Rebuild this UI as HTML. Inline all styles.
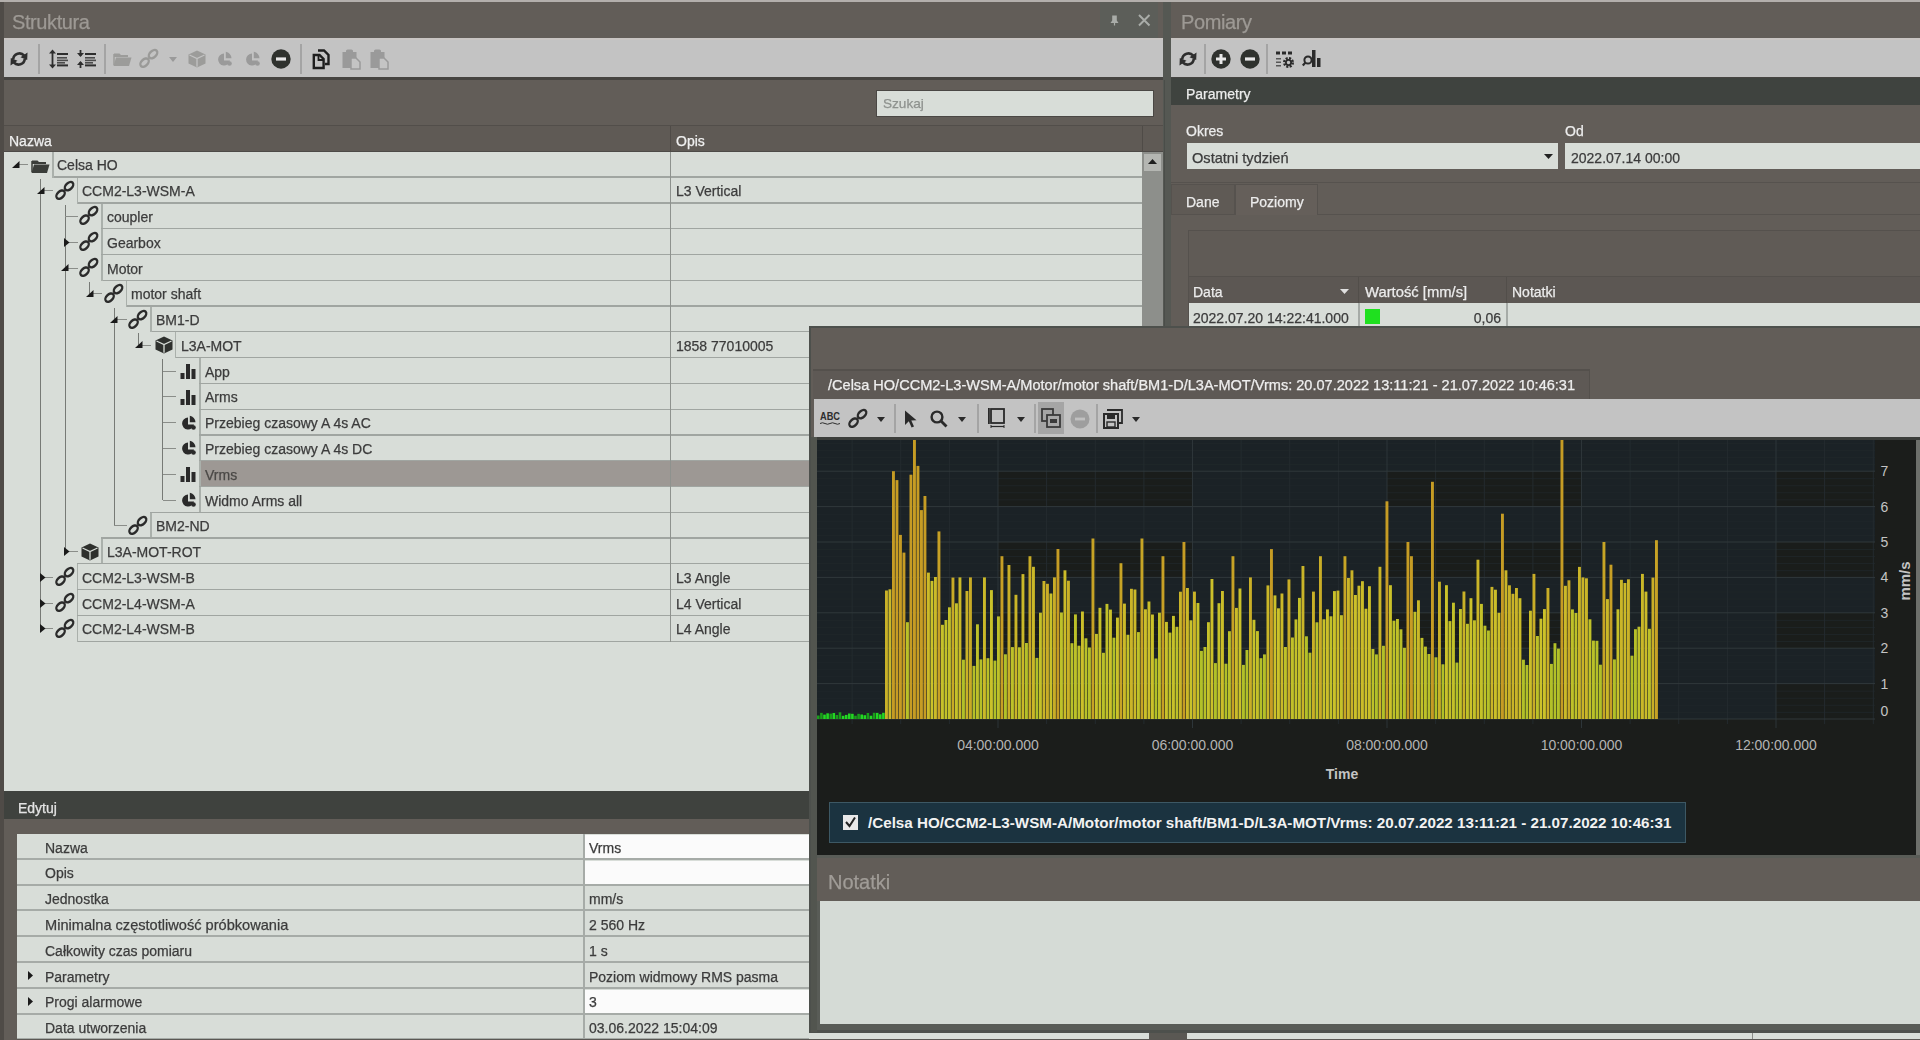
<!DOCTYPE html>
<html><head><meta charset="utf-8">
<style>
*{margin:0;padding:0;box-sizing:border-box}
html,body{width:1920px;height:1040px;overflow:hidden;background:#625d58;font-family:"Liberation Sans",sans-serif;font-size:14px;color:#3a3a3a}
.a{position:absolute}
.t{position:absolute;white-space:nowrap;line-height:1;will-change:transform;-webkit-text-stroke:0.25px currentColor}
body{-webkit-font-smoothing:antialiased}
</style></head><body>
<div class="a" style="left:0px;top:0px;width:1920px;height:2px;background:#b3afac;"></div>
<div class="a" style="left:0px;top:2px;width:4px;height:1038px;background:#4f4b47;"></div>
<div class="a" style="left:4px;top:2px;width:1160px;height:36px;background:#625d58;"></div>
<div class="t" style="left:12px;top:12px;font-size:20px;color:#9d9994;letter-spacing:-0.4px">Struktura</div>
<div class="a" style="left:1100px;top:2px;width:58px;height:36px;background:#5c5e59;"></div>
<svg class="a" style="left:1109.5px;top:14.5px;overflow:visible" width="9" height="11" viewBox="0 0 9 11"><path d="M2.2 0.5 L6.8 0.5 L6.8 5.5 L8.5 8 L0.5 8 L2.2 5.5 Z" fill="#a9aca8"/><rect x="3.9" y="8" width="1.2" height="2.5" fill="#a9aca8"/></svg>
<svg class="a" style="left:1137.8px;top:14.2px;overflow:visible" width="12.5" height="12.5" viewBox="0 0 12.5 12.5"><path d="M1 1 L11.5 11.5 M11.5 1 L1 11.5" stroke="#a9aca8" stroke-width="2"/></svg>
<div class="a" style="left:4px;top:38px;width:1160px;height:39px;background:#c3c3c3;"></div>
<div class="a" style="left:4px;top:38px;width:1160px;height:2px;background:#c9c5c3;"></div>
<svg class="a" style="left:10px;top:51px;overflow:visible" width="18" height="16" viewBox="0 0 18 16"><path d="M3.2 8.2 A6.3 6.3 0 0 1 14.2 4.6" stroke="#2e2e2e" stroke-width="2.6" fill="none"/><path d="M17.5 1.5 L17.2 9 L10.5 6.2 Z" fill="#2e2e2e"/><path d="M14.8 7.8 A6.3 6.3 0 0 1 3.8 11.4" stroke="#2e2e2e" stroke-width="2.6" fill="none"/><path d="M0.5 14.5 L0.8 7 L7.5 9.8 Z" fill="#2e2e2e"/></svg>
<div class="a" style="left:38px;top:44px;width:2px;height:30px;background:#a4a4a4;"></div>
<svg class="a" style="left:49px;top:49px;overflow:visible" width="20" height="20" viewBox="0 0 20 20"><path d="M3.5 0.5 L7 4.5 L0 4.5 Z" fill="#2e2e2e"/><path d="M3.5 19.5 L7 15.5 L0 15.5 Z" fill="#2e2e2e"/><rect x="2.6" y="4" width="1.8" height="12" fill="#2e2e2e"/><rect x="8" y="4" width="11" height="2" fill="#2e2e2e"/><rect x="8" y="8" width="10" height="1.6" fill="#2e2e2e" opacity=".8"/><rect x="8" y="10.6" width="11" height="1.6" fill="#2e2e2e" opacity=".8"/><rect x="8" y="13" width="8" height="1.6" fill="#2e2e2e" opacity=".8"/><rect x="8" y="15.4" width="11" height="2" fill="#2e2e2e"/></svg>
<svg class="a" style="left:77px;top:49px;overflow:visible" width="20" height="20" viewBox="0 0 20 20"><path d="M3.5 8 L7 4 L0 4 Z" fill="#2e2e2e"/><path d="M3.5 12 L7 16 L0 16 Z" fill="#2e2e2e"/><rect x="2.6" y="1" width="1.8" height="6" fill="#2e2e2e"/><rect x="2.6" y="13" width="1.8" height="6" fill="#2e2e2e"/><rect x="8" y="4" width="11" height="2" fill="#2e2e2e"/><rect x="8" y="8" width="10" height="1.6" fill="#2e2e2e" opacity=".8"/><rect x="8" y="10.6" width="11" height="1.6" fill="#2e2e2e" opacity=".8"/><rect x="8" y="13" width="8" height="1.6" fill="#2e2e2e" opacity=".8"/><rect x="8" y="15.4" width="11" height="2" fill="#2e2e2e"/></svg>
<div class="a" style="left:104px;top:44px;width:2px;height:30px;background:#a4a4a4;"></div>
<svg class="a" style="left:113px;top:50px;overflow:visible" width="19" height="17" viewBox="0 0 19 17"><path d="M1 3.5 L6.5 3.5 L8 5 L15 5 L15 7 L1 7 Z" fill="#9c9c9a"/><path d="M0.5 16 L3 7.5 L18.5 7.5 L16 16 Z" fill="#9c9c9a"/><path d="M1 4 L1 15" stroke="#9c9c9a" stroke-width="1.5"/></svg>
<svg class="a" style="left:140px;top:49px;overflow:visible" width="19" height="20" viewBox="0 0 19 20"><g transform="translate(8.8 9.4) rotate(-45)"><ellipse cx="-6" cy="0" rx="5" ry="3.2" stroke="#9a9a98" stroke-width="2.4" fill="none"/><ellipse cx="6" cy="0" rx="5" ry="3.2" stroke="#9a9a98" stroke-width="2.4" fill="none"/></g></svg>
<svg class="a" style="left:169px;top:57px;overflow:visible" width="8" height="5" viewBox="0 0 8 5"><path d="M0 0 L8 0 L4.0 5 Z" fill="#9a9a9a"/></svg>
<svg class="a" style="left:188px;top:50px;overflow:visible" width="18" height="18" viewBox="0 0 18 18"><path d="M9 0.5 L17.5 4.5 L17.5 13.5 L9 17.5 L0.5 13.5 L0.5 4.5 Z" fill="#9c9c9a"/><path d="M1.5 5 L9 8.6 L16.5 5 M9 8.6 L9 16.8" stroke="#c3c3c3" stroke-width="1.3" fill="none"/></svg>
<svg class="a" style="left:217px;top:51px;overflow:visible" width="16" height="16" viewBox="0 0 16 16"><path d="M7 2.5 A6 6 0 1 0 13 9.5 L7 9.5 Z" fill="#9a9a9a"/><path d="M8.8 0.8 A6.5 6.5 0 0 1 14.5 7.2 L8.8 7.2 Z" fill="#9a9a9a"/><circle cx="12.5" cy="12.5" r="2.3" fill="#9a9a9a"/></svg>
<svg class="a" style="left:245px;top:51px;overflow:visible" width="16" height="16" viewBox="0 0 16 16"><path d="M7 2.5 A6 6 0 1 0 13 9.5 L7 9.5 Z" fill="#9a9a9a"/><path d="M8.8 0.8 A6.5 6.5 0 0 1 14.5 7.2 L8.8 7.2 Z" fill="#9a9a9a"/><circle cx="12.5" cy="12.5" r="2.3" fill="#9a9a9a"/></svg>
<svg class="a" style="left:271px;top:49px;overflow:visible" width="20" height="20" viewBox="0 0 20 20"><circle cx="10" cy="10" r="9.7" fill="#2f322e"/><rect x="5" y="8.4" width="10" height="3.2" fill="#e8e8e8"/></svg>
<div class="a" style="left:300px;top:44px;width:2px;height:30px;background:#a4a4a4;"></div>
<svg class="a" style="left:312px;top:49px;overflow:visible" width="19" height="21" viewBox="0 0 19 21"><path d="M6 1.5 L12 1.5 L16.5 6 L16.5 15 L13 15" stroke="#1e1e1e" stroke-width="2.4" fill="none"/><path d="M1.8 6 L7.5 6 L11.6 10 L11.6 19 L1.8 19 Z" stroke="#1e1e1e" stroke-width="2.4" fill="none"/><path d="M6.5 6.5 L6.5 11 L11 11" stroke="#1e1e1e" stroke-width="1.8" fill="none"/></svg>
<svg class="a" style="left:342px;top:49px;overflow:visible" width="19" height="21" viewBox="0 0 19 21"><rect x="0.5" y="3" width="14" height="16" fill="#9a9a9a"/><rect x="4" y="0.5" width="7" height="4" rx="1.5" fill="#9a9a9a"/><path d="M9 9 L14 9 L18 13 L18 20 L9 20 Z" fill="#c4c4c4" stroke="#9a9a9a" stroke-width="1.5"/></svg>
<svg class="a" style="left:370px;top:49px;overflow:visible" width="19" height="21" viewBox="0 0 19 21"><rect x="0.5" y="3" width="14" height="16" fill="#9a9a9a"/><rect x="4" y="0.5" width="7" height="4" rx="1.5" fill="#9a9a9a"/><path d="M9 9 L14 9 L18 13 L18 20 L9 20 Z" fill="#c4c4c4" stroke="#9a9a9a" stroke-width="1.5"/></svg>
<div class="a" style="left:4px;top:77px;width:1160px;height:3px;background:#464441;"></div>
<div class="a" style="left:4px;top:80px;width:1160px;height:45px;background:#625d58;"></div>
<div class="a" style="left:876px;top:89.5px;width:278px;height:27px;background:#d8ddd8;border:1.5px solid #4a4744"></div>
<div class="t" style="left:883px;top:97px;font-size:13.6px;color:#8e928e;">Szukaj</div>
<div class="a" style="left:4px;top:125px;width:1160px;height:27px;background:#5f5a55;border-top:1px solid #524e4a"></div>
<div class="a" style="left:4px;top:151px;width:1160px;height:1px;background:#4d4a47;"></div>
<div class="t" style="left:9px;top:133.5px;font-size:14px;color:#efefef;">Nazwa</div>
<div class="a" style="left:670px;top:126px;width:1px;height:26px;background:#4f4b47;"></div>
<div class="t" style="left:676px;top:133.5px;font-size:14px;color:#efefef;">Opis</div>
<div class="a" style="left:1142px;top:126px;width:1px;height:26px;background:#4f4b47;"></div>
<div class="a" style="left:4px;top:152px;width:1139px;height:639px;background:#d8ddd8;"></div>
<div class="a" style="left:1142px;top:152px;width:21px;height:639px;background:#8d8f8b;"></div>
<div class="a" style="left:1144px;top:154px;width:17px;height:17px;background:#b4b6b2;"></div>
<svg class="a" style="left:1148px;top:159px;overflow:visible" width="9" height="5" viewBox="0 0 9 5"><path d="M0 5 L9 5 L4.5 0 Z" fill="#1e1e1e"/></svg>
<div class="a" style="left:1163px;top:2px;width:8px;height:1038px;background:#555853;"></div>
<div class="a" style="left:1164px;top:80px;width:1px;height:960px;background:#4a4d49;"></div>
<div class="a" style="left:199.3px;top:461.36px;width:942.7px;height:25.78px;background:#9d9894;"></div>
<div class="a" style="left:40.08px;top:178.78px;width:1px;height:450.15px;background:#777a76;"></div>
<div class="a" style="left:64.56px;top:204.56px;width:1px;height:347.03px;background:#777a76;"></div>
<div class="a" style="left:89.04px;top:281.9px;width:1px;height:11.89px;background:#777a76;"></div>
<div class="a" style="left:113.52px;top:307.68px;width:1px;height:218.13px;background:#777a76;"></div>
<div class="a" style="left:138.0px;top:333.46px;width:1px;height:11.89px;background:#777a76;"></div>
<div class="a" style="left:162.48px;top:359.24px;width:1px;height:140.79px;background:#777a76;"></div>
<div class="a" style="left:52.0px;top:176.48px;width:1090.0px;height:1.3px;background:#a0a5a1;"></div>
<div class="a" style="left:52.0px;top:152.0px;width:1.5px;height:25.78px;background:#aab0ab;"></div>
<div class="a" style="left:16.1px;top:164.39px;width:12.4px;height:1px;background:#8a8d89;"></div>
<svg class="a" style="left:12.1px;top:160.89px;overflow:visible" width="8" height="7" viewBox="0 0 8 7"><path d="M7.5 0 L7.5 7 L0 7 Z" fill="#1a1a1a"/></svg>
<svg class="a" style="left:31.0px;top:156.89px;overflow:visible" width="19" height="17" viewBox="0 0 19 17"><path d="M1 3.5 L6.5 3.5 L8 5 L15 5 L15 7 L1 7 Z" fill="#3a3d39"/><path d="M0.5 16 L3 7.5 L18.5 7.5 L16 16 Z" fill="#3a3d39"/><path d="M1 4 L1 15" stroke="#3a3d39" stroke-width="1.5"/></svg>
<div class="t" style="left:57.3px;top:158.39px;font-size:14px;color:#3c3c3c;">Celsa HO</div>
<div class="a" style="left:76.55px;top:202.26px;width:1065.45px;height:1.3px;background:#a0a5a1;"></div>
<div class="a" style="left:76.55px;top:176.48px;width:1065.45px;height:1.3px;background:#a0a5a1;"></div>
<div class="a" style="left:76.55px;top:177.78px;width:1.5px;height:25.78px;background:#aab0ab;"></div>
<div class="a" style="left:40.58px;top:190.17px;width:12.47px;height:1px;background:#8a8d89;"></div>
<svg class="a" style="left:36.58px;top:186.67px;overflow:visible" width="8" height="7" viewBox="0 0 8 7"><path d="M7.5 0 L7.5 7 L0 7 Z" fill="#1a1a1a"/></svg>
<svg class="a" style="left:55.55px;top:180.67px;overflow:visible" width="19" height="20" viewBox="0 0 19 20"><g transform="translate(8.8 9.4) rotate(-45)"><ellipse cx="-6" cy="0" rx="5" ry="3.2" stroke="#2b2b2b" stroke-width="2.4" fill="none"/><ellipse cx="6" cy="0" rx="5" ry="3.2" stroke="#2b2b2b" stroke-width="2.4" fill="none"/></g></svg>
<div class="t" style="left:81.97px;top:184.17px;font-size:14px;color:#3c3c3c;">CCM2-L3-WSM-A</div>
<div class="t" style="left:676px;top:184.17px;font-size:14px;color:#3c3c3c;">L3 Vertical</div>
<div class="a" style="left:101.1px;top:228.04px;width:1040.9px;height:1.3px;background:#a0a5a1;"></div>
<div class="a" style="left:101.1px;top:202.26px;width:1040.9px;height:1.3px;background:#a0a5a1;"></div>
<div class="a" style="left:101.1px;top:203.56px;width:1.5px;height:25.78px;background:#aab0ab;"></div>
<div class="a" style="left:65.06px;top:215.95px;width:12.54px;height:1px;background:#8a8d89;"></div>
<svg class="a" style="left:80.1px;top:206.45px;overflow:visible" width="19" height="20" viewBox="0 0 19 20"><g transform="translate(8.8 9.4) rotate(-45)"><ellipse cx="-6" cy="0" rx="5" ry="3.2" stroke="#2b2b2b" stroke-width="2.4" fill="none"/><ellipse cx="6" cy="0" rx="5" ry="3.2" stroke="#2b2b2b" stroke-width="2.4" fill="none"/></g></svg>
<div class="t" style="left:106.64px;top:209.95px;font-size:14px;color:#3c3c3c;">coupler</div>
<div class="a" style="left:101.1px;top:253.82px;width:1040.9px;height:1.3px;background:#a0a5a1;"></div>
<div class="a" style="left:101.1px;top:228.04px;width:1040.9px;height:1.3px;background:#a0a5a1;"></div>
<div class="a" style="left:101.1px;top:229.34px;width:1.5px;height:25.78px;background:#aab0ab;"></div>
<div class="a" style="left:65.06px;top:241.73px;width:12.54px;height:1px;background:#8a8d89;"></div>
<svg class="a" style="left:64.06px;top:237.73px;overflow:visible" width="6" height="9" viewBox="0 0 6 9"><path d="M0 0 L5.5 4.5 L0 9 Z" fill="#1a1a1a"/></svg>
<svg class="a" style="left:80.1px;top:232.23px;overflow:visible" width="19" height="20" viewBox="0 0 19 20"><g transform="translate(8.8 9.4) rotate(-45)"><ellipse cx="-6" cy="0" rx="5" ry="3.2" stroke="#2b2b2b" stroke-width="2.4" fill="none"/><ellipse cx="6" cy="0" rx="5" ry="3.2" stroke="#2b2b2b" stroke-width="2.4" fill="none"/></g></svg>
<div class="t" style="left:106.64px;top:235.73px;font-size:14px;color:#3c3c3c;">Gearbox</div>
<div class="a" style="left:101.1px;top:279.6px;width:1040.9px;height:1.3px;background:#a0a5a1;"></div>
<div class="a" style="left:101.1px;top:253.82px;width:1040.9px;height:1.3px;background:#a0a5a1;"></div>
<div class="a" style="left:101.1px;top:255.12px;width:1.5px;height:25.78px;background:#aab0ab;"></div>
<div class="a" style="left:65.06px;top:267.51px;width:12.54px;height:1px;background:#8a8d89;"></div>
<svg class="a" style="left:61.06px;top:264.01px;overflow:visible" width="8" height="7" viewBox="0 0 8 7"><path d="M7.5 0 L7.5 7 L0 7 Z" fill="#1a1a1a"/></svg>
<svg class="a" style="left:80.1px;top:258.01px;overflow:visible" width="19" height="20" viewBox="0 0 19 20"><g transform="translate(8.8 9.4) rotate(-45)"><ellipse cx="-6" cy="0" rx="5" ry="3.2" stroke="#2b2b2b" stroke-width="2.4" fill="none"/><ellipse cx="6" cy="0" rx="5" ry="3.2" stroke="#2b2b2b" stroke-width="2.4" fill="none"/></g></svg>
<div class="t" style="left:106.64px;top:261.51px;font-size:14px;color:#3c3c3c;">Motor</div>
<div class="a" style="left:125.65px;top:305.38px;width:1016.35px;height:1.3px;background:#a0a5a1;"></div>
<div class="a" style="left:125.65px;top:279.6px;width:1016.35px;height:1.3px;background:#a0a5a1;"></div>
<div class="a" style="left:125.65px;top:280.9px;width:1.5px;height:25.78px;background:#aab0ab;"></div>
<div class="a" style="left:89.54px;top:293.29px;width:12.61px;height:1px;background:#8a8d89;"></div>
<svg class="a" style="left:85.54px;top:289.79px;overflow:visible" width="8" height="7" viewBox="0 0 8 7"><path d="M7.5 0 L7.5 7 L0 7 Z" fill="#1a1a1a"/></svg>
<svg class="a" style="left:104.65px;top:283.79px;overflow:visible" width="19" height="20" viewBox="0 0 19 20"><g transform="translate(8.8 9.4) rotate(-45)"><ellipse cx="-6" cy="0" rx="5" ry="3.2" stroke="#2b2b2b" stroke-width="2.4" fill="none"/><ellipse cx="6" cy="0" rx="5" ry="3.2" stroke="#2b2b2b" stroke-width="2.4" fill="none"/></g></svg>
<div class="t" style="left:131.31px;top:287.29px;font-size:14px;color:#3c3c3c;">motor shaft</div>
<div class="a" style="left:150.2px;top:331.16px;width:991.8px;height:1.3px;background:#a0a5a1;"></div>
<div class="a" style="left:150.2px;top:305.38px;width:991.8px;height:1.3px;background:#a0a5a1;"></div>
<div class="a" style="left:150.2px;top:306.68px;width:1.5px;height:25.78px;background:#aab0ab;"></div>
<div class="a" style="left:114.02px;top:319.07px;width:12.68px;height:1px;background:#8a8d89;"></div>
<svg class="a" style="left:110.02px;top:315.57px;overflow:visible" width="8" height="7" viewBox="0 0 8 7"><path d="M7.5 0 L7.5 7 L0 7 Z" fill="#1a1a1a"/></svg>
<svg class="a" style="left:129.2px;top:309.57px;overflow:visible" width="19" height="20" viewBox="0 0 19 20"><g transform="translate(8.8 9.4) rotate(-45)"><ellipse cx="-6" cy="0" rx="5" ry="3.2" stroke="#2b2b2b" stroke-width="2.4" fill="none"/><ellipse cx="6" cy="0" rx="5" ry="3.2" stroke="#2b2b2b" stroke-width="2.4" fill="none"/></g></svg>
<div class="t" style="left:155.98px;top:313.07px;font-size:14px;color:#3c3c3c;">BM1-D</div>
<div class="a" style="left:174.75px;top:356.94px;width:967.25px;height:1.3px;background:#a0a5a1;"></div>
<div class="a" style="left:174.75px;top:331.16px;width:967.25px;height:1.3px;background:#a0a5a1;"></div>
<div class="a" style="left:174.75px;top:332.46px;width:1.5px;height:25.78px;background:#aab0ab;"></div>
<div class="a" style="left:138.5px;top:344.85px;width:12.75px;height:1px;background:#8a8d89;"></div>
<svg class="a" style="left:134.5px;top:341.35px;overflow:visible" width="8" height="7" viewBox="0 0 8 7"><path d="M7.5 0 L7.5 7 L0 7 Z" fill="#1a1a1a"/></svg>
<svg class="a" style="left:154.75px;top:336.35px;overflow:visible" width="18" height="18" viewBox="0 0 18 18"><path d="M9 0.5 L17.5 4.5 L17.5 13.5 L9 17.5 L0.5 13.5 L0.5 4.5 Z" fill="#2e302d"/><path d="M1.5 5 L9 8.6 L16.5 5 M9 8.6 L9 16.8" stroke="#d8ddd8" stroke-width="1.3" fill="none"/></svg>
<div class="t" style="left:180.65px;top:338.85px;font-size:14px;color:#3c3c3c;">L3A-MOT</div>
<div class="t" style="left:676px;top:338.85px;font-size:14px;color:#3c3c3c;">1858 77010005</div>
<div class="a" style="left:199.3px;top:382.72px;width:942.7px;height:1.3px;background:#a0a5a1;"></div>
<div class="a" style="left:199.3px;top:356.94px;width:942.7px;height:1.3px;background:#a0a5a1;"></div>
<div class="a" style="left:199.3px;top:358.24px;width:1.5px;height:25.78px;background:#aab0ab;"></div>
<div class="a" style="left:162.98px;top:370.63px;width:12.82px;height:1px;background:#8a8d89;"></div>
<svg class="a" style="left:180.3px;top:363.13px;overflow:visible" width="16" height="16" viewBox="0 0 16 16"><rect x="0.5" y="10" width="4" height="6" fill="#2a2a2a"/><rect x="6" y="1" width="4" height="15" fill="#2a2a2a"/><rect x="11.5" y="6" width="4" height="10" fill="#2a2a2a"/></svg>
<div class="t" style="left:205.32px;top:364.63px;font-size:14px;color:#3c3c3c;">App</div>
<div class="a" style="left:199.3px;top:408.5px;width:942.7px;height:1.3px;background:#a0a5a1;"></div>
<div class="a" style="left:199.3px;top:382.72px;width:942.7px;height:1.3px;background:#a0a5a1;"></div>
<div class="a" style="left:199.3px;top:384.02px;width:1.5px;height:25.78px;background:#aab0ab;"></div>
<div class="a" style="left:162.98px;top:396.41px;width:12.82px;height:1px;background:#8a8d89;"></div>
<svg class="a" style="left:180.3px;top:388.91px;overflow:visible" width="16" height="16" viewBox="0 0 16 16"><rect x="0.5" y="10" width="4" height="6" fill="#2a2a2a"/><rect x="6" y="1" width="4" height="15" fill="#2a2a2a"/><rect x="11.5" y="6" width="4" height="10" fill="#2a2a2a"/></svg>
<div class="t" style="left:205.32px;top:390.41px;font-size:14px;color:#3c3c3c;">Arms</div>
<div class="a" style="left:199.3px;top:434.28px;width:942.7px;height:1.3px;background:#a0a5a1;"></div>
<div class="a" style="left:199.3px;top:408.5px;width:942.7px;height:1.3px;background:#a0a5a1;"></div>
<div class="a" style="left:199.3px;top:409.8px;width:1.5px;height:25.78px;background:#aab0ab;"></div>
<div class="a" style="left:162.98px;top:422.19px;width:12.82px;height:1px;background:#8a8d89;"></div>
<svg class="a" style="left:181.3px;top:414.69px;overflow:visible" width="16" height="16" viewBox="0 0 16 16"><path d="M7 2.5 A6 6 0 1 0 13 9.5 L7 9.5 Z" fill="#2a2a2a"/><path d="M8.8 0.8 A6.5 6.5 0 0 1 14.5 7.2 L8.8 7.2 Z" fill="#2a2a2a"/><circle cx="12.5" cy="12.5" r="2.3" fill="#2a2a2a"/></svg>
<div class="t" style="left:205.32px;top:416.19px;font-size:14px;color:#3c3c3c;">Przebieg czasowy A 4s AC</div>
<div class="a" style="left:199.3px;top:460.06px;width:942.7px;height:1.3px;background:#a0a5a1;"></div>
<div class="a" style="left:199.3px;top:434.28px;width:942.7px;height:1.3px;background:#a0a5a1;"></div>
<div class="a" style="left:199.3px;top:435.58px;width:1.5px;height:25.78px;background:#aab0ab;"></div>
<div class="a" style="left:162.98px;top:447.97px;width:12.82px;height:1px;background:#8a8d89;"></div>
<svg class="a" style="left:181.3px;top:440.47px;overflow:visible" width="16" height="16" viewBox="0 0 16 16"><path d="M7 2.5 A6 6 0 1 0 13 9.5 L7 9.5 Z" fill="#2a2a2a"/><path d="M8.8 0.8 A6.5 6.5 0 0 1 14.5 7.2 L8.8 7.2 Z" fill="#2a2a2a"/><circle cx="12.5" cy="12.5" r="2.3" fill="#2a2a2a"/></svg>
<div class="t" style="left:205.32px;top:441.97px;font-size:14px;color:#3c3c3c;">Przebieg czasowy A 4s DC</div>
<div class="a" style="left:199.3px;top:485.84px;width:942.7px;height:1.3px;background:#a0a5a1;"></div>
<div class="a" style="left:199.3px;top:460.06px;width:942.7px;height:1.3px;background:#a0a5a1;"></div>
<div class="a" style="left:199.3px;top:461.36px;width:1.5px;height:25.78px;background:#aab0ab;"></div>
<div class="a" style="left:162.98px;top:473.75px;width:12.82px;height:1px;background:#8a8d89;"></div>
<svg class="a" style="left:180.3px;top:466.25px;overflow:visible" width="16" height="16" viewBox="0 0 16 16"><rect x="0.5" y="10" width="4" height="6" fill="#2a2a2a"/><rect x="6" y="1" width="4" height="15" fill="#2a2a2a"/><rect x="11.5" y="6" width="4" height="10" fill="#2a2a2a"/></svg>
<div class="t" style="left:205.32px;top:467.75px;font-size:14px;color:#4a4846;">Vrms</div>
<div class="a" style="left:199.3px;top:511.62px;width:942.7px;height:1.3px;background:#a0a5a1;"></div>
<div class="a" style="left:199.3px;top:485.84px;width:942.7px;height:1.3px;background:#a0a5a1;"></div>
<div class="a" style="left:199.3px;top:487.14px;width:1.5px;height:25.78px;background:#aab0ab;"></div>
<div class="a" style="left:162.98px;top:499.53px;width:12.82px;height:1px;background:#8a8d89;"></div>
<svg class="a" style="left:181.3px;top:492.03px;overflow:visible" width="16" height="16" viewBox="0 0 16 16"><path d="M7 2.5 A6 6 0 1 0 13 9.5 L7 9.5 Z" fill="#2a2a2a"/><path d="M8.8 0.8 A6.5 6.5 0 0 1 14.5 7.2 L8.8 7.2 Z" fill="#2a2a2a"/><circle cx="12.5" cy="12.5" r="2.3" fill="#2a2a2a"/></svg>
<div class="t" style="left:205.32px;top:493.53px;font-size:14px;color:#3c3c3c;">Widmo Arms all</div>
<div class="a" style="left:150.2px;top:537.4px;width:991.8px;height:1.3px;background:#a0a5a1;"></div>
<div class="a" style="left:150.2px;top:511.62px;width:991.8px;height:1.3px;background:#a0a5a1;"></div>
<div class="a" style="left:150.2px;top:512.92px;width:1.5px;height:25.78px;background:#aab0ab;"></div>
<div class="a" style="left:114.02px;top:525.31px;width:12.68px;height:1px;background:#8a8d89;"></div>
<svg class="a" style="left:129.2px;top:515.81px;overflow:visible" width="19" height="20" viewBox="0 0 19 20"><g transform="translate(8.8 9.4) rotate(-45)"><ellipse cx="-6" cy="0" rx="5" ry="3.2" stroke="#2b2b2b" stroke-width="2.4" fill="none"/><ellipse cx="6" cy="0" rx="5" ry="3.2" stroke="#2b2b2b" stroke-width="2.4" fill="none"/></g></svg>
<div class="t" style="left:155.98px;top:519.31px;font-size:14px;color:#3c3c3c;">BM2-ND</div>
<div class="a" style="left:101.1px;top:563.18px;width:1040.9px;height:1.3px;background:#a0a5a1;"></div>
<div class="a" style="left:101.1px;top:537.4px;width:1040.9px;height:1.3px;background:#a0a5a1;"></div>
<div class="a" style="left:101.1px;top:538.7px;width:1.5px;height:25.78px;background:#aab0ab;"></div>
<div class="a" style="left:65.06px;top:551.09px;width:12.54px;height:1px;background:#8a8d89;"></div>
<svg class="a" style="left:64.06px;top:547.09px;overflow:visible" width="6" height="9" viewBox="0 0 6 9"><path d="M0 0 L5.5 4.5 L0 9 Z" fill="#1a1a1a"/></svg>
<svg class="a" style="left:81.1px;top:542.59px;overflow:visible" width="18" height="18" viewBox="0 0 18 18"><path d="M9 0.5 L17.5 4.5 L17.5 13.5 L9 17.5 L0.5 13.5 L0.5 4.5 Z" fill="#2e302d"/><path d="M1.5 5 L9 8.6 L16.5 5 M9 8.6 L9 16.8" stroke="#d8ddd8" stroke-width="1.3" fill="none"/></svg>
<div class="t" style="left:106.64px;top:545.09px;font-size:14px;color:#3c3c3c;">L3A-MOT-ROT</div>
<div class="a" style="left:76.55px;top:588.96px;width:1065.45px;height:1.3px;background:#a0a5a1;"></div>
<div class="a" style="left:76.55px;top:563.18px;width:1065.45px;height:1.3px;background:#a0a5a1;"></div>
<div class="a" style="left:76.55px;top:564.48px;width:1.5px;height:25.78px;background:#aab0ab;"></div>
<div class="a" style="left:40.58px;top:576.87px;width:12.47px;height:1px;background:#8a8d89;"></div>
<svg class="a" style="left:39.58px;top:572.87px;overflow:visible" width="6" height="9" viewBox="0 0 6 9"><path d="M0 0 L5.5 4.5 L0 9 Z" fill="#1a1a1a"/></svg>
<svg class="a" style="left:55.55px;top:567.37px;overflow:visible" width="19" height="20" viewBox="0 0 19 20"><g transform="translate(8.8 9.4) rotate(-45)"><ellipse cx="-6" cy="0" rx="5" ry="3.2" stroke="#2b2b2b" stroke-width="2.4" fill="none"/><ellipse cx="6" cy="0" rx="5" ry="3.2" stroke="#2b2b2b" stroke-width="2.4" fill="none"/></g></svg>
<div class="t" style="left:81.97px;top:570.87px;font-size:14px;color:#3c3c3c;">CCM2-L3-WSM-B</div>
<div class="t" style="left:676px;top:570.87px;font-size:14px;color:#3c3c3c;">L3 Angle</div>
<div class="a" style="left:76.55px;top:614.74px;width:1065.45px;height:1.3px;background:#a0a5a1;"></div>
<div class="a" style="left:76.55px;top:588.96px;width:1065.45px;height:1.3px;background:#a0a5a1;"></div>
<div class="a" style="left:76.55px;top:590.26px;width:1.5px;height:25.78px;background:#aab0ab;"></div>
<div class="a" style="left:40.58px;top:602.65px;width:12.47px;height:1px;background:#8a8d89;"></div>
<svg class="a" style="left:39.58px;top:598.65px;overflow:visible" width="6" height="9" viewBox="0 0 6 9"><path d="M0 0 L5.5 4.5 L0 9 Z" fill="#1a1a1a"/></svg>
<svg class="a" style="left:55.55px;top:593.15px;overflow:visible" width="19" height="20" viewBox="0 0 19 20"><g transform="translate(8.8 9.4) rotate(-45)"><ellipse cx="-6" cy="0" rx="5" ry="3.2" stroke="#2b2b2b" stroke-width="2.4" fill="none"/><ellipse cx="6" cy="0" rx="5" ry="3.2" stroke="#2b2b2b" stroke-width="2.4" fill="none"/></g></svg>
<div class="t" style="left:81.97px;top:596.65px;font-size:14px;color:#3c3c3c;">CCM2-L4-WSM-A</div>
<div class="t" style="left:676px;top:596.65px;font-size:14px;color:#3c3c3c;">L4 Vertical</div>
<div class="a" style="left:76.55px;top:640.52px;width:1065.45px;height:1.3px;background:#a0a5a1;"></div>
<div class="a" style="left:76.55px;top:614.74px;width:1065.45px;height:1.3px;background:#a0a5a1;"></div>
<div class="a" style="left:76.55px;top:616.04px;width:1.5px;height:25.78px;background:#aab0ab;"></div>
<div class="a" style="left:40.58px;top:628.43px;width:12.47px;height:1px;background:#8a8d89;"></div>
<svg class="a" style="left:39.58px;top:624.43px;overflow:visible" width="6" height="9" viewBox="0 0 6 9"><path d="M0 0 L5.5 4.5 L0 9 Z" fill="#1a1a1a"/></svg>
<svg class="a" style="left:55.55px;top:618.93px;overflow:visible" width="19" height="20" viewBox="0 0 19 20"><g transform="translate(8.8 9.4) rotate(-45)"><ellipse cx="-6" cy="0" rx="5" ry="3.2" stroke="#2b2b2b" stroke-width="2.4" fill="none"/><ellipse cx="6" cy="0" rx="5" ry="3.2" stroke="#2b2b2b" stroke-width="2.4" fill="none"/></g></svg>
<div class="t" style="left:81.97px;top:622.43px;font-size:14px;color:#3c3c3c;">CCM2-L4-WSM-B</div>
<div class="t" style="left:676px;top:622.43px;font-size:14px;color:#3c3c3c;">L4 Angle</div>
<div class="a" style="left:670px;top:152px;width:1.2px;height:489.82px;background:#8e928e;"></div>
<div class="a" style="left:4px;top:791px;width:1160px;height:28px;background:#3f423e;"></div>
<div class="t" style="left:18px;top:801px;font-size:14px;color:#e4e4e4;">Edytuj</div>
<div class="a" style="left:4px;top:819px;width:1160px;height:221px;background:#625d58;"></div>
<div class="a" style="left:17px;top:834px;width:1147px;height:206px;background:#d8ddd8;"></div>
<div class="a" style="left:585px;top:835.0px;width:579px;height:22.8px;background:#fbfbfb;"></div>
<div class="a" style="left:17px;top:857.8px;width:1147px;height:2px;background:#a6aba7;"></div>
<div class="t" style="left:45px;top:840.5px;font-size:14px;color:#3c3c3c;">Nazwa</div>
<div class="t" style="left:589px;top:840.5px;font-size:14px;color:#3c3c3c;">Vrms</div>
<div class="a" style="left:585px;top:860.8px;width:579px;height:22.8px;background:#fbfbfb;"></div>
<div class="a" style="left:17px;top:883.6px;width:1147px;height:2px;background:#a6aba7;"></div>
<div class="t" style="left:45px;top:866.3px;font-size:14px;color:#3c3c3c;">Opis</div>
<div class="t" style="left:589px;top:866.3px;font-size:14px;color:#3c3c3c;"></div>
<div class="a" style="left:17px;top:909.4px;width:1147px;height:2px;background:#a6aba7;"></div>
<div class="t" style="left:45px;top:892.1px;font-size:14px;color:#3c3c3c;">Jednostka</div>
<div class="t" style="left:589px;top:892.1px;font-size:14px;color:#3c3c3c;">mm/s</div>
<div class="a" style="left:17px;top:935.2px;width:1147px;height:2px;background:#a6aba7;"></div>
<div class="t" style="left:45px;top:917.9px;font-size:14px;color:#3c3c3c;"><span style="font-size:14.6px">Minimalna częstotliwość próbkowania</span></div>
<div class="t" style="left:589px;top:917.9px;font-size:14px;color:#3c3c3c;">2 560 Hz</div>
<div class="a" style="left:17px;top:961.0px;width:1147px;height:2px;background:#a6aba7;"></div>
<div class="t" style="left:45px;top:943.7px;font-size:14px;color:#3c3c3c;">Całkowity czas pomiaru</div>
<div class="t" style="left:589px;top:943.7px;font-size:14px;color:#3c3c3c;">1 s</div>
<div class="a" style="left:17px;top:986.8px;width:1147px;height:2px;background:#a6aba7;"></div>
<div class="t" style="left:45px;top:969.5px;font-size:14px;color:#3c3c3c;">Parametry</div>
<div class="t" style="left:589px;top:969.5px;font-size:14px;color:#3c3c3c;">Poziom widmowy RMS pasma</div>
<svg class="a" style="left:28px;top:971.0px;overflow:visible" width="5" height="9" viewBox="0 0 5 9"><path d="M0 0 L5 4.5 L0 9 Z" fill="#1a1a1a"/></svg>
<div class="a" style="left:585px;top:989.8px;width:579px;height:22.8px;background:#fbfbfb;"></div>
<div class="a" style="left:17px;top:1012.6px;width:1147px;height:2px;background:#a6aba7;"></div>
<div class="t" style="left:45px;top:995.3px;font-size:14px;color:#3c3c3c;">Progi alarmowe</div>
<div class="t" style="left:589px;top:995.3px;font-size:14px;color:#3c3c3c;">3</div>
<svg class="a" style="left:28px;top:996.8px;overflow:visible" width="5" height="9" viewBox="0 0 5 9"><path d="M0 0 L5 4.5 L0 9 Z" fill="#1a1a1a"/></svg>
<div class="a" style="left:17px;top:1038.4px;width:1147px;height:2px;background:#a6aba7;"></div>
<div class="t" style="left:45px;top:1021.1px;font-size:14px;color:#3c3c3c;">Data utworzenia</div>
<div class="t" style="left:589px;top:1021.1px;font-size:14px;color:#3c3c3c;">03.06.2022 15:04:09</div>
<div class="a" style="left:583px;top:834px;width:2px;height:206px;background:#a6aba7;"></div>
<div class="a" style="left:1171px;top:2px;width:749px;height:36px;background:#625d58;"></div>
<div class="t" style="left:1181px;top:12px;font-size:20px;color:#9d9994;letter-spacing:-0.4px">Pomiary</div>
<div class="a" style="left:1171px;top:38px;width:749px;height:39px;background:#c3c3c3;"></div>
<div class="a" style="left:1171px;top:38px;width:749px;height:2px;background:#c9c5c3;"></div>
<svg class="a" style="left:1179px;top:51px;overflow:visible" width="18" height="16" viewBox="0 0 18 16"><path d="M3.2 8.2 A6.3 6.3 0 0 1 14.2 4.6" stroke="#2e2e2e" stroke-width="2.6" fill="none"/><path d="M17.5 1.5 L17.2 9 L10.5 6.2 Z" fill="#2e2e2e"/><path d="M14.8 7.8 A6.3 6.3 0 0 1 3.8 11.4" stroke="#2e2e2e" stroke-width="2.6" fill="none"/><path d="M0.5 14.5 L0.8 7 L7.5 9.8 Z" fill="#2e2e2e"/></svg>
<div class="a" style="left:1204px;top:44px;width:2px;height:30px;background:#a4a4a4;"></div>
<svg class="a" style="left:1211px;top:49px;overflow:visible" width="20" height="20" viewBox="0 0 20 20"><circle cx="10" cy="10" r="9.7" fill="#2f322e"/><rect x="5" y="8.5" width="10" height="3" fill="#e8e8e8"/><rect x="8.5" y="5" width="3" height="10" fill="#e8e8e8"/></svg>
<svg class="a" style="left:1240px;top:49px;overflow:visible" width="20" height="20" viewBox="0 0 20 20"><circle cx="10" cy="10" r="9.7" fill="#2f322e"/><rect x="5" y="8.4" width="10" height="3.2" fill="#e8e8e8"/></svg>
<div class="a" style="left:1266px;top:44px;width:2px;height:30px;background:#a4a4a4;"></div>
<svg class="a" style="left:1276px;top:50px;overflow:visible" width="19" height="18" viewBox="0 0 19 18"><rect x="0" y="1.5" width="4" height="3" fill="#2a2a2a"/><rect x="6" y="1.5" width="4" height="3" fill="#2a2a2a"/><rect x="12" y="1.5" width="4" height="3" fill="#2a2a2a"/><rect x="0" y="8" width="5" height="1.5" fill="#2a2a2a" opacity=".7"/><rect x="0" y="11.5" width="5" height="1.5" fill="#2a2a2a" opacity=".7"/><rect x="0" y="15" width="5" height="1.5" fill="#2a2a2a" opacity=".7"/><circle cx="12.5" cy="12.5" r="4.2" fill="none" stroke="#2a2a2a" stroke-width="2.6" stroke-dasharray="2 1.3"/><circle cx="12.5" cy="12.5" r="2.6" fill="none" stroke="#2a2a2a" stroke-width="1.8"/></svg>
<svg class="a" style="left:1302px;top:50px;overflow:visible" width="20" height="18" viewBox="0 0 20 18"><rect x="10" y="0" width="3.5" height="17" fill="#2a2a2a"/><rect x="15" y="8" width="3.5" height="9" fill="#2a2a2a"/><circle cx="6" cy="10" r="3.6" fill="none" stroke="#2a2a2a" stroke-width="2"/><path d="M3.5 12.5 L0.8 15.5" stroke="#2a2a2a" stroke-width="2.2"/></svg>
<div class="a" style="left:1171px;top:77px;width:749px;height:3px;background:#464441;"></div>
<div class="a" style="left:1171px;top:77.5px;width:749px;height:27.5px;background:#3f433f;"></div>
<div class="t" style="left:1186px;top:87px;font-size:14px;color:#ececec;">Parametry</div>
<div class="a" style="left:1171px;top:105px;width:749px;height:221px;background:#625d58;"></div>
<div class="t" style="left:1186px;top:123.5px;font-size:14px;color:#ececec;">Okres</div>
<div class="a" style="left:1187px;top:143px;width:371px;height:26px;background:#d8ddd8;"></div>
<div class="t" style="left:1192px;top:150.5px;font-size:14.6px;color:#3c3c3c;">Ostatni tydzień</div>
<svg class="a" style="left:1544px;top:154px;overflow:visible" width="9" height="5" viewBox="0 0 9 5"><path d="M0 0 L9 0 L4.5 5 Z" fill="#222"/></svg>
<div class="t" style="left:1565px;top:123.5px;font-size:14px;color:#ececec;">Od</div>
<div class="a" style="left:1565px;top:143px;width:355px;height:26px;background:#d8ddd8;"></div>
<div class="t" style="left:1571px;top:150.5px;font-size:14px;color:#3c3c3c;">2022.07.14 00:00</div>
<div class="a" style="left:1171px;top:182px;width:749px;height:1px;background:#56524e;"></div>
<div class="a" style="left:1171px;top:184px;width:64px;height:30px;background:#5f5a55;border:1px solid #56524e;border-bottom:none"></div>
<div class="t" style="left:1186px;top:195px;font-size:14px;color:#ececec;">Dane</div>
<div class="a" style="left:1235px;top:184px;width:83px;height:31px;background:#655f5a;border:1px solid #56524e;border-bottom:none"></div>
<div class="t" style="left:1250px;top:195px;font-size:14px;color:#ececec;">Poziomy</div>
<div class="a" style="left:1171px;top:214px;width:64px;height:1px;background:#56524e;"></div>
<div class="a" style="left:1318px;top:214px;width:602px;height:1px;background:#56524e;"></div>
<div class="a" style="left:1188px;top:230px;width:732px;height:96px;background:#605b56;border:1px solid #55514d;border-right:none"></div>
<div class="a" style="left:1189px;top:276px;width:731px;height:27px;background:#5c5753;border-top:1px solid #54504c"></div>
<div class="t" style="left:1193px;top:285px;font-size:14px;color:#ececec;">Data</div>
<svg class="a" style="left:1340px;top:289px;overflow:visible" width="9" height="5" viewBox="0 0 9 5"><path d="M0 0 L9 0 L4.5 5 Z" fill="#e0e0e0"/></svg>
<div class="a" style="left:1358px;top:277px;width:1px;height:26px;background:#524e4a;"></div>
<div class="t" style="left:1365px;top:285px;font-size:14.8px;color:#ececec;">Wartość [mm/s]</div>
<div class="a" style="left:1506px;top:277px;width:1px;height:26px;background:#524e4a;"></div>
<div class="t" style="left:1512px;top:285px;font-size:14px;color:#ececec;">Notatki</div>
<div class="a" style="left:1189px;top:303px;width:731px;height:23px;background:#d8ddd8;"></div>
<div class="t" style="left:1193px;top:311px;font-size:14px;color:#3c3c3c;">2022.07.20 14:22:41.000</div>
<div class="a" style="left:1358px;top:303px;width:1.5px;height:23px;background:#a6aba7;"></div>
<div class="a" style="left:1365px;top:309px;width:15px;height:15px;background:#1fe01f;"></div>
<div class="t" style="left:1440px;width:61px;text-align:right;top:311px;font-size:14px;color:#3c3c3c">0,06</div>
<div class="a" style="left:1506px;top:303px;width:1.5px;height:23px;background:#a6aba7;"></div>
<div class="a" style="left:809px;top:1032px;width:1111px;height:8px;background:#d8ddd8;"></div>
<div class="a" style="left:1149px;top:1032px;width:38px;height:8px;background:#5a5853;"></div>
<div class="a" style="left:1752px;top:1032px;width:1px;height:7px;background:#8a8c88;"></div>
<div class="a" style="left:17px;top:1038.5px;width:1903px;height:1.5px;background:#5a5753;"></div>
<div class="a" style="left:809px;top:326px;width:1111px;height:706.5px;background:#4d504c;"></div>
<div class="a" style="left:812px;top:855px;width:1108px;height:175px;background:#595c57;"></div>
<div class="a" style="left:811px;top:328px;width:1109px;height:527px;background:#625d58;"></div>
<div class="a" style="left:813px;top:369px;width:777px;height:30px;background:#5e5955;border-top:2px solid #54504c;border-right:1px solid #54504c"></div>
<div class="t" style="left:828px;top:378px;font-size:14.56px;color:#eeeeee;">/Celsa HO/CCM2-L3-WSM-A/Motor/motor shaft/BM1-D/L3A-MOT/Vrms: 20.07.2022 13:11:21 - 21.07.2022 10:46:31</div>
<div class="a" style="left:814px;top:399px;width:1106px;height:38px;background:#c3c3c3;"></div>
<svg class="a" style="left:820px;top:410px;overflow:visible" width="21" height="16" viewBox="0 0 21 16"><text x="0" y="10" font-family="Liberation Sans" font-size="10.5" font-weight="bold" fill="#2e2e2e" textLength="20" lengthAdjust="spacingAndGlyphs">ABC</text><path d="M0 13.5 Q2.5 12 5 13.5 T10 13.5 T15 13.5 T20 13.5" stroke="#2e2e2e" stroke-width="1" fill="none"/></svg>
<svg class="a" style="left:849px;top:409px;overflow:visible" width="19" height="20" viewBox="0 0 19 20"><g transform="translate(8.8 9.4) rotate(-45)"><ellipse cx="-6" cy="0" rx="5" ry="3.2" stroke="#2b2b2b" stroke-width="2.4" fill="none"/><ellipse cx="6" cy="0" rx="5" ry="3.2" stroke="#2b2b2b" stroke-width="2.4" fill="none"/></g></svg>
<svg class="a" style="left:877px;top:417px;overflow:visible" width="8" height="5" viewBox="0 0 8 5"><path d="M0 0 L8 0 L4.0 5 Z" fill="#2a2a2a"/></svg>
<div class="a" style="left:894px;top:404px;width:2px;height:29px;background:#a4a4a4;"></div>
<svg class="a" style="left:904px;top:410px;overflow:visible" width="14" height="18" viewBox="0 0 14 18"><path d="M1 0.5 L1 15 L4.8 11.3 L7.6 17.5 L10 16.4 L7.3 10.4 L12.5 10.2 Z" fill="#2a2a2a"/></svg>
<svg class="a" style="left:930px;top:410px;overflow:visible" width="18" height="18" viewBox="0 0 18 18"><circle cx="7" cy="7" r="5.4" fill="none" stroke="#2a2a2a" stroke-width="2.4"/><path d="M11 11 L16.5 16.5" stroke="#2a2a2a" stroke-width="2.8"/></svg>
<svg class="a" style="left:958px;top:417px;overflow:visible" width="8" height="5" viewBox="0 0 8 5"><path d="M0 0 L8 0 L4.0 5 Z" fill="#2a2a2a"/></svg>
<div class="a" style="left:977px;top:404px;width:2px;height:29px;background:#a4a4a4;"></div>
<svg class="a" style="left:988px;top:408px;overflow:visible" width="19" height="21" viewBox="0 0 19 21"><rect x="3" y="1" width="13" height="14" fill="none" stroke="#2a2a2a" stroke-width="1.8"/><rect x="0" y="0" width="1.8" height="16" fill="#2a2a2a"/><path d="M3 18.5 L16 18.5" stroke="#2a2a2a" stroke-width="1.2"/><path d="M3 17 L3 20 M16 17 L16 20" stroke="#2a2a2a" stroke-width="1"/></svg>
<svg class="a" style="left:1017px;top:417px;overflow:visible" width="8" height="5" viewBox="0 0 8 5"><path d="M0 0 L8 0 L4.0 5 Z" fill="#2a2a2a"/></svg>
<div class="a" style="left:1034px;top:404px;width:2px;height:29px;background:#a4a4a4;"></div>
<div class="a" style="left:1038px;top:402px;width:26px;height:32px;background:#a5a5a5;"></div>
<svg class="a" style="left:1041px;top:408px;overflow:visible" width="20" height="20" viewBox="0 0 20 20"><rect x="1" y="1" width="11" height="12" fill="none" stroke="#3a3a3a" stroke-width="1.8"/><rect x="6" y="7" width="13" height="12" fill="#a8a8a8" stroke="#3a3a3a" stroke-width="1.8"/><rect x="9" y="11" width="7" height="4" fill="#3a3a3a"/></svg>
<svg class="a" style="left:1070px;top:409px;overflow:visible" width="20" height="20" viewBox="0 0 20 20"><circle cx="10" cy="10" r="9.5" fill="#9e9e9e"/><rect x="5" y="8.6" width="10" height="2.8" fill="#c0c0c0"/></svg>
<div class="a" style="left:1096px;top:404px;width:2px;height:29px;background:#a4a4a4;"></div>
<svg class="a" style="left:1103px;top:409px;overflow:visible" width="20" height="20" viewBox="0 0 20 20"><path d="M4 1 L19 1 L19 14 L15 14" stroke="#2a2a2a" stroke-width="1.8" fill="none"/><rect x="1" y="5" width="14" height="14" fill="none" stroke="#2a2a2a" stroke-width="2"/><rect x="4" y="6" width="8" height="4" fill="#2a2a2a"/><rect x="4" y="13" width="8" height="5" fill="none" stroke="#2a2a2a" stroke-width="1.4"/></svg>
<svg class="a" style="left:1132px;top:417px;overflow:visible" width="8" height="5" viewBox="0 0 8 5"><path d="M0 0 L8 0 L4.0 5 Z" fill="#2a2a2a"/></svg>
<div class="a" style="left:814px;top:437px;width:1106px;height:3px;background:#3c3e3b;"></div>
<div class="a" style="left:811px;top:437px;width:6px;height:595px;background:#52554f;"></div>
<div class="a" style="left:817px;top:440px;width:1099px;height:415px;background:#1b1d1b;"></div>
<div class="a" style="left:1916px;top:440px;width:4px;height:415px;background:#6d6f6b;"></div>
<svg class="a" style="left:817px;top:440px" width="1099" height="415" viewBox="817 440 1099 415"><rect x="817" y="440" width="1058" height="279" fill="#1b2226"/><rect x="998.0" y="683.6" width="194.5" height="35.4" fill="#1a1d1b"/><rect x="998.0" y="612.8" width="194.5" height="35.4" fill="#1a1d1b"/><rect x="998.0" y="542.0" width="194.5" height="35.4" fill="#1a1d1b"/><rect x="998.0" y="471.2" width="194.5" height="35.4" fill="#1a1d1b"/><rect x="1387.0" y="683.6" width="194.5" height="35.4" fill="#1a1d1b"/><rect x="1387.0" y="612.8" width="194.5" height="35.4" fill="#1a1d1b"/><rect x="1387.0" y="542.0" width="194.5" height="35.4" fill="#1a1d1b"/><rect x="1387.0" y="471.2" width="194.5" height="35.4" fill="#1a1d1b"/><rect x="1776.0" y="683.6" width="99.0" height="35.4" fill="#1a1d1b"/><rect x="1776.0" y="612.8" width="99.0" height="35.4" fill="#1a1d1b"/><rect x="1776.0" y="542.0" width="99.0" height="35.4" fill="#1a1d1b"/><rect x="1776.0" y="471.2" width="99.0" height="35.4" fill="#1a1d1b"/><rect x="817" y="711.9" width="1058" height="0.8" fill="#20272a"/><rect x="817" y="704.8" width="1058" height="0.8" fill="#20272a"/><rect x="817" y="697.8" width="1058" height="0.8" fill="#20272a"/><rect x="817" y="690.7" width="1058" height="0.8" fill="#20272a"/><rect x="817" y="676.5" width="1058" height="0.8" fill="#20272a"/><rect x="817" y="669.4" width="1058" height="0.8" fill="#20272a"/><rect x="817" y="662.4" width="1058" height="0.8" fill="#20272a"/><rect x="817" y="655.3" width="1058" height="0.8" fill="#20272a"/><rect x="817" y="641.1" width="1058" height="0.8" fill="#20272a"/><rect x="817" y="634.0" width="1058" height="0.8" fill="#20272a"/><rect x="817" y="627.0" width="1058" height="0.8" fill="#20272a"/><rect x="817" y="619.9" width="1058" height="0.8" fill="#20272a"/><rect x="817" y="605.7" width="1058" height="0.8" fill="#20272a"/><rect x="817" y="598.6" width="1058" height="0.8" fill="#20272a"/><rect x="817" y="591.6" width="1058" height="0.8" fill="#20272a"/><rect x="817" y="584.5" width="1058" height="0.8" fill="#20272a"/><rect x="817" y="570.3" width="1058" height="0.8" fill="#20272a"/><rect x="817" y="563.2" width="1058" height="0.8" fill="#20272a"/><rect x="817" y="556.2" width="1058" height="0.8" fill="#20272a"/><rect x="817" y="549.1" width="1058" height="0.8" fill="#20272a"/><rect x="817" y="534.9" width="1058" height="0.8" fill="#20272a"/><rect x="817" y="527.8" width="1058" height="0.8" fill="#20272a"/><rect x="817" y="520.8" width="1058" height="0.8" fill="#20272a"/><rect x="817" y="513.7" width="1058" height="0.8" fill="#20272a"/><rect x="817" y="499.5" width="1058" height="0.8" fill="#20272a"/><rect x="817" y="492.4" width="1058" height="0.8" fill="#20272a"/><rect x="817" y="485.4" width="1058" height="0.8" fill="#20272a"/><rect x="817" y="478.3" width="1058" height="0.8" fill="#20272a"/><rect x="817" y="464.1" width="1058" height="0.8" fill="#20272a"/><rect x="817" y="457.0" width="1058" height="0.8" fill="#20272a"/><rect x="817" y="450.0" width="1058" height="0.8" fill="#20272a"/><rect x="817" y="442.9" width="1058" height="0.8" fill="#20272a"/><rect x="851.6" y="440" width="1" height="284" fill="#242b2f"/><rect x="900.2" y="440" width="1" height="284" fill="#242b2f"/><rect x="948.9" y="440" width="1" height="284" fill="#242b2f"/><rect x="997.5" y="440" width="1" height="288" fill="#2d3539"/><rect x="1046.1" y="440" width="1" height="284" fill="#242b2f"/><rect x="1094.8" y="440" width="1" height="284" fill="#242b2f"/><rect x="1143.4" y="440" width="1" height="284" fill="#242b2f"/><rect x="1192.0" y="440" width="1" height="288" fill="#2d3539"/><rect x="1240.6" y="440" width="1" height="284" fill="#242b2f"/><rect x="1289.2" y="440" width="1" height="284" fill="#242b2f"/><rect x="1337.9" y="440" width="1" height="284" fill="#242b2f"/><rect x="1386.5" y="440" width="1" height="288" fill="#2d3539"/><rect x="1435.1" y="440" width="1" height="284" fill="#242b2f"/><rect x="1483.8" y="440" width="1" height="284" fill="#242b2f"/><rect x="1532.4" y="440" width="1" height="284" fill="#242b2f"/><rect x="1581.0" y="440" width="1" height="288" fill="#2d3539"/><rect x="1629.6" y="440" width="1" height="284" fill="#242b2f"/><rect x="1678.2" y="440" width="1" height="284" fill="#242b2f"/><rect x="1726.9" y="440" width="1" height="284" fill="#242b2f"/><rect x="1775.5" y="440" width="1" height="288" fill="#2d3539"/><rect x="1824.1" y="440" width="1" height="284" fill="#242b2f"/><rect x="1872.8" y="440" width="1" height="284" fill="#242b2f"/><rect x="817" y="718.5" width="1058" height="1" fill="#30383b"/><rect x="817" y="683.1" width="1058" height="1" fill="#30383b"/><rect x="817" y="647.7" width="1058" height="1" fill="#30383b"/><rect x="817" y="612.3" width="1058" height="1" fill="#30383b"/><rect x="817" y="576.9" width="1058" height="1" fill="#30383b"/><rect x="817" y="541.5" width="1058" height="1" fill="#30383b"/><rect x="817" y="506.1" width="1058" height="1" fill="#30383b"/><rect x="817" y="470.7" width="1058" height="1" fill="#30383b"/><rect x="885.00" y="590.5" width="2.9" height="128.5" fill="#c9b127"/><rect x="888.50" y="589.3" width="2.9" height="129.7" fill="#cbb929"/><rect x="892.00" y="471.2" width="2.9" height="247.8" fill="#c69c24"/><rect x="895.50" y="480.1" width="2.9" height="238.9" fill="#c69c24"/><rect x="899.00" y="534.9" width="2.9" height="184.1" fill="#c69c24"/><rect x="902.50" y="552.6" width="2.9" height="166.4" fill="#c69c24"/><rect x="906.00" y="622.2" width="2.9" height="96.8" fill="#bac129"/><rect x="909.50" y="474.7" width="2.9" height="244.3" fill="#c69c24"/><rect x="913.00" y="439.3" width="2.9" height="279.7" fill="#c69c24"/><rect x="916.50" y="465.9" width="2.9" height="253.1" fill="#c69c24"/><rect x="920.00" y="510.1" width="2.9" height="208.9" fill="#c69c24"/><rect x="923.50" y="496.0" width="2.9" height="223.0" fill="#c69c24"/><rect x="927.00" y="572.6" width="2.9" height="146.4" fill="#cbba29"/><rect x="930.50" y="580.9" width="2.9" height="138.1" fill="#cbc22a"/><rect x="934.00" y="577.0" width="2.9" height="142.0" fill="#cbba29"/><rect x="937.50" y="531.4" width="2.9" height="187.6" fill="#c7a125"/><rect x="941.00" y="624.8" width="2.9" height="94.2" fill="#c6c22a"/><rect x="944.50" y="620.0" width="2.9" height="99.0" fill="#c2c129"/><rect x="948.00" y="607.3" width="2.9" height="111.7" fill="#c4c129"/><rect x="951.50" y="577.6" width="2.9" height="141.4" fill="#c8ab26"/><rect x="955.00" y="603.3" width="2.9" height="115.7" fill="#c5c129"/><rect x="958.50" y="577.4" width="2.9" height="141.6" fill="#cbb929"/><rect x="962.00" y="659.7" width="2.9" height="59.3" fill="#b2c028"/><rect x="965.50" y="591.0" width="2.9" height="128.0" fill="#c9b127"/><rect x="969.00" y="577.4" width="2.9" height="141.6" fill="#c8ab26"/><rect x="972.50" y="665.9" width="2.9" height="53.1" fill="#b5c028"/><rect x="976.00" y="624.3" width="2.9" height="94.7" fill="#bec129"/><rect x="979.50" y="659.4" width="2.9" height="59.6" fill="#b5c028"/><rect x="983.00" y="577.4" width="2.9" height="141.6" fill="#cbba29"/><rect x="986.50" y="658.2" width="2.9" height="60.8" fill="#b9c129"/><rect x="990.00" y="590.1" width="2.9" height="128.9" fill="#c9c22a"/><rect x="993.50" y="660.6" width="2.9" height="58.4" fill="#b2c028"/><rect x="997.00" y="616.4" width="2.9" height="102.6" fill="#bec129"/><rect x="1000.50" y="556.2" width="2.9" height="162.8" fill="#c79f25"/><rect x="1004.00" y="654.3" width="2.9" height="64.7" fill="#b2c028"/><rect x="1007.50" y="565.0" width="2.9" height="154.0" fill="#c9ae27"/><rect x="1011.00" y="647.1" width="2.9" height="71.9" fill="#bec129"/><rect x="1014.50" y="594.8" width="2.9" height="124.2" fill="#cab528"/><rect x="1018.00" y="647.3" width="2.9" height="71.7" fill="#bcc129"/><rect x="1021.50" y="574.1" width="2.9" height="144.9" fill="#cbb929"/><rect x="1025.00" y="643.0" width="2.9" height="76.0" fill="#b5c028"/><rect x="1028.50" y="556.2" width="2.9" height="162.8" fill="#c8ab26"/><rect x="1032.00" y="566.8" width="2.9" height="152.2" fill="#cab828"/><rect x="1035.50" y="657.9" width="2.9" height="61.1" fill="#b2c028"/><rect x="1039.00" y="612.7" width="2.9" height="106.3" fill="#c5c129"/><rect x="1042.50" y="581.0" width="2.9" height="138.0" fill="#cab428"/><rect x="1046.00" y="583.8" width="2.9" height="135.2" fill="#c9ad27"/><rect x="1049.50" y="593.5" width="2.9" height="125.5" fill="#c9c22a"/><rect x="1053.00" y="577.4" width="2.9" height="141.6" fill="#c9ad27"/><rect x="1056.50" y="549.0" width="2.9" height="170.0" fill="#c69c24"/><rect x="1060.00" y="612.5" width="2.9" height="106.5" fill="#bec129"/><rect x="1063.50" y="570.3" width="2.9" height="148.7" fill="#cbbb29"/><rect x="1067.00" y="580.7" width="2.9" height="138.3" fill="#c9b127"/><rect x="1070.50" y="643.2" width="2.9" height="75.8" fill="#b9c129"/><rect x="1074.00" y="614.4" width="2.9" height="104.6" fill="#bdc129"/><rect x="1077.50" y="645.7" width="2.9" height="73.3" fill="#bdc129"/><rect x="1081.00" y="611.5" width="2.9" height="107.5" fill="#ccc02a"/><rect x="1084.50" y="638.3" width="2.9" height="80.7" fill="#b9c129"/><rect x="1088.00" y="647.5" width="2.9" height="71.5" fill="#b7c028"/><rect x="1091.50" y="538.5" width="2.9" height="180.5" fill="#c7a325"/><rect x="1095.00" y="633.9" width="2.9" height="85.1" fill="#c5c129"/><rect x="1098.50" y="607.8" width="2.9" height="111.2" fill="#c9c22a"/><rect x="1102.00" y="652.8" width="2.9" height="66.2" fill="#bbc129"/><rect x="1105.50" y="603.9" width="2.9" height="115.1" fill="#c1c129"/><rect x="1109.00" y="609.6" width="2.9" height="109.4" fill="#cbc22a"/><rect x="1112.50" y="637.7" width="2.9" height="81.3" fill="#b2c028"/><rect x="1116.00" y="617.6" width="2.9" height="101.4" fill="#cbc22a"/><rect x="1119.50" y="563.2" width="2.9" height="155.8" fill="#c7a425"/><rect x="1123.00" y="603.6" width="2.9" height="115.4" fill="#cbba29"/><rect x="1126.50" y="634.8" width="2.9" height="84.2" fill="#c3c129"/><rect x="1130.00" y="588.8" width="2.9" height="130.2" fill="#cab428"/><rect x="1133.50" y="589.5" width="2.9" height="129.5" fill="#cbb929"/><rect x="1137.00" y="632.1" width="2.9" height="86.9" fill="#bfc129"/><rect x="1140.50" y="538.5" width="2.9" height="180.5" fill="#c7a525"/><rect x="1144.00" y="609.3" width="2.9" height="109.7" fill="#ccbf2a"/><rect x="1147.50" y="601.5" width="2.9" height="117.5" fill="#cbbe29"/><rect x="1151.00" y="614.5" width="2.9" height="104.5" fill="#cbc22a"/><rect x="1154.50" y="658.5" width="2.9" height="60.5" fill="#b2c028"/><rect x="1158.00" y="612.7" width="2.9" height="106.3" fill="#c1c129"/><rect x="1161.50" y="556.2" width="2.9" height="162.8" fill="#c7a025"/><rect x="1165.00" y="621.9" width="2.9" height="97.1" fill="#c9c22a"/><rect x="1168.50" y="632.6" width="2.9" height="86.4" fill="#c0c129"/><rect x="1172.00" y="615.9" width="2.9" height="103.1" fill="#c7c22a"/><rect x="1175.50" y="626.8" width="2.9" height="92.2" fill="#bcc129"/><rect x="1179.00" y="591.7" width="2.9" height="127.3" fill="#cab528"/><rect x="1182.50" y="542.0" width="2.9" height="177.0" fill="#c69c24"/><rect x="1186.00" y="588.0" width="2.9" height="131.0" fill="#cbb929"/><rect x="1189.50" y="620.3" width="2.9" height="98.7" fill="#c8c22a"/><rect x="1193.00" y="591.6" width="2.9" height="127.4" fill="#cab428"/><rect x="1196.50" y="603.0" width="2.9" height="116.0" fill="#c6c22a"/><rect x="1200.00" y="650.9" width="2.9" height="68.1" fill="#b2c028"/><rect x="1203.50" y="647.0" width="2.9" height="72.0" fill="#b8c028"/><rect x="1207.00" y="622.2" width="2.9" height="96.8" fill="#c7c22a"/><rect x="1210.50" y="579.0" width="2.9" height="140.0" fill="#ccc02a"/><rect x="1214.00" y="663.1" width="2.9" height="55.9" fill="#b2c028"/><rect x="1217.50" y="603.2" width="2.9" height="115.8" fill="#c6c22a"/><rect x="1221.00" y="591.0" width="2.9" height="128.0" fill="#cbbe29"/><rect x="1224.50" y="663.7" width="2.9" height="55.3" fill="#b2c028"/><rect x="1228.00" y="631.2" width="2.9" height="87.8" fill="#bcc129"/><rect x="1231.50" y="556.2" width="2.9" height="162.8" fill="#c7a225"/><rect x="1235.00" y="607.9" width="2.9" height="111.1" fill="#cbbc29"/><rect x="1238.50" y="588.5" width="2.9" height="130.5" fill="#cbc22a"/><rect x="1242.00" y="664.9" width="2.9" height="54.1" fill="#b2c028"/><rect x="1245.50" y="650.0" width="2.9" height="69.0" fill="#b2c028"/><rect x="1249.00" y="577.4" width="2.9" height="141.6" fill="#c9af27"/><rect x="1252.50" y="619.8" width="2.9" height="99.2" fill="#c7c22a"/><rect x="1256.00" y="631.1" width="2.9" height="87.9" fill="#c5c129"/><rect x="1259.50" y="658.2" width="2.9" height="60.8" fill="#b5c028"/><rect x="1263.00" y="654.4" width="2.9" height="64.6" fill="#b5c028"/><rect x="1266.50" y="585.4" width="2.9" height="133.6" fill="#cab728"/><rect x="1270.00" y="549.1" width="2.9" height="169.9" fill="#c69c24"/><rect x="1273.50" y="595.4" width="2.9" height="123.6" fill="#ccc12a"/><rect x="1277.00" y="608.3" width="2.9" height="110.7" fill="#ccc22a"/><rect x="1280.50" y="593.5" width="2.9" height="125.5" fill="#cbb929"/><rect x="1284.00" y="647.0" width="2.9" height="72.0" fill="#bfc129"/><rect x="1287.50" y="579.4" width="2.9" height="139.6" fill="#c9ad27"/><rect x="1291.00" y="637.5" width="2.9" height="81.5" fill="#c1c129"/><rect x="1294.50" y="619.4" width="2.9" height="99.6" fill="#c3c129"/><rect x="1298.00" y="597.9" width="2.9" height="121.1" fill="#c4c129"/><rect x="1301.50" y="566.0" width="2.9" height="153.0" fill="#cab528"/><rect x="1305.00" y="636.3" width="2.9" height="82.7" fill="#b4c028"/><rect x="1308.50" y="652.7" width="2.9" height="66.3" fill="#b7c028"/><rect x="1312.00" y="591.6" width="2.9" height="127.4" fill="#c9b127"/><rect x="1315.50" y="622.3" width="2.9" height="96.7" fill="#bac129"/><rect x="1319.00" y="556.2" width="2.9" height="162.8" fill="#c9ad27"/><rect x="1322.50" y="619.3" width="2.9" height="99.7" fill="#c7c22a"/><rect x="1326.00" y="609.4" width="2.9" height="109.6" fill="#ccc02a"/><rect x="1329.50" y="616.3" width="2.9" height="102.7" fill="#c2c129"/><rect x="1333.00" y="591.1" width="2.9" height="127.9" fill="#cac22a"/><rect x="1336.50" y="590.6" width="2.9" height="128.4" fill="#cbbc29"/><rect x="1340.00" y="615.2" width="2.9" height="103.8" fill="#c5c129"/><rect x="1343.50" y="556.2" width="2.9" height="162.8" fill="#c7a525"/><rect x="1347.00" y="578.0" width="2.9" height="141.0" fill="#cab428"/><rect x="1350.50" y="570.3" width="2.9" height="148.7" fill="#c9b227"/><rect x="1354.00" y="595.0" width="2.9" height="124.0" fill="#ccc02a"/><rect x="1357.50" y="585.7" width="2.9" height="133.3" fill="#cbbc29"/><rect x="1361.00" y="581.2" width="2.9" height="137.8" fill="#cbbc29"/><rect x="1364.50" y="608.7" width="2.9" height="110.3" fill="#ccc02a"/><rect x="1368.00" y="586.2" width="2.9" height="132.8" fill="#cbbf29"/><rect x="1371.50" y="649.0" width="2.9" height="70.0" fill="#bdc129"/><rect x="1375.00" y="654.4" width="2.9" height="64.6" fill="#b2c028"/><rect x="1378.50" y="566.8" width="2.9" height="152.2" fill="#cab528"/><rect x="1382.00" y="645.8" width="2.9" height="73.2" fill="#b3c028"/><rect x="1385.50" y="501.3" width="2.9" height="217.7" fill="#c69c24"/><rect x="1389.00" y="585.2" width="2.9" height="133.8" fill="#cbc22a"/><rect x="1392.50" y="620.7" width="2.9" height="98.3" fill="#bcc129"/><rect x="1396.00" y="619.0" width="2.9" height="100.0" fill="#c0c129"/><rect x="1399.50" y="629.3" width="2.9" height="89.7" fill="#b8c028"/><rect x="1403.00" y="647.8" width="2.9" height="71.2" fill="#b8c028"/><rect x="1406.50" y="542.0" width="2.9" height="177.0" fill="#c69c24"/><rect x="1410.00" y="556.2" width="2.9" height="162.8" fill="#c69c24"/><rect x="1413.50" y="611.8" width="2.9" height="107.2" fill="#c1c129"/><rect x="1417.00" y="600.3" width="2.9" height="118.7" fill="#cab828"/><rect x="1420.50" y="637.9" width="2.9" height="81.1" fill="#c2c129"/><rect x="1424.00" y="646.6" width="2.9" height="72.4" fill="#bdc129"/><rect x="1427.50" y="654.0" width="2.9" height="65.0" fill="#b7c028"/><rect x="1431.00" y="481.8" width="2.9" height="237.2" fill="#c69c24"/><rect x="1434.50" y="657.3" width="2.9" height="61.7" fill="#b2c028"/><rect x="1438.00" y="581.7" width="2.9" height="137.3" fill="#c9b227"/><rect x="1441.50" y="664.3" width="2.9" height="54.7" fill="#b2c028"/><rect x="1445.00" y="585.2" width="2.9" height="133.8" fill="#cbc22a"/><rect x="1448.50" y="621.1" width="2.9" height="97.9" fill="#c2c129"/><rect x="1452.00" y="602.7" width="2.9" height="116.3" fill="#c3c129"/><rect x="1455.50" y="662.6" width="2.9" height="56.4" fill="#b2c028"/><rect x="1459.00" y="609.0" width="2.9" height="110.0" fill="#c2c129"/><rect x="1462.50" y="591.5" width="2.9" height="127.5" fill="#c9b227"/><rect x="1466.00" y="623.8" width="2.9" height="95.2" fill="#c0c129"/><rect x="1469.50" y="598.2" width="2.9" height="120.8" fill="#ccc22a"/><rect x="1473.00" y="620.3" width="2.9" height="98.7" fill="#c4c129"/><rect x="1476.50" y="559.7" width="2.9" height="159.3" fill="#cab528"/><rect x="1480.00" y="603.9" width="2.9" height="115.1" fill="#c4c129"/><rect x="1483.50" y="625.7" width="2.9" height="93.3" fill="#bec129"/><rect x="1487.00" y="630.5" width="2.9" height="88.5" fill="#b5c028"/><rect x="1490.50" y="586.9" width="2.9" height="132.1" fill="#cab528"/><rect x="1494.00" y="589.7" width="2.9" height="129.3" fill="#cbbf29"/><rect x="1497.50" y="612.8" width="2.9" height="106.2" fill="#cbbf29"/><rect x="1501.00" y="513.7" width="2.9" height="205.3" fill="#c69c24"/><rect x="1504.50" y="570.3" width="2.9" height="148.7" fill="#cab528"/><rect x="1508.00" y="585.3" width="2.9" height="133.7" fill="#c9b227"/><rect x="1511.50" y="593.8" width="2.9" height="125.2" fill="#cab428"/><rect x="1515.00" y="588.0" width="2.9" height="131.0" fill="#cab428"/><rect x="1518.50" y="598.2" width="2.9" height="120.8" fill="#cbbc29"/><rect x="1522.00" y="659.7" width="2.9" height="59.3" fill="#b2c028"/><rect x="1525.50" y="665.0" width="2.9" height="54.0" fill="#b2c028"/><rect x="1529.00" y="610.7" width="2.9" height="108.3" fill="#cbbe29"/><rect x="1532.50" y="573.9" width="2.9" height="145.1" fill="#c9ad27"/><rect x="1536.00" y="636.0" width="2.9" height="83.0" fill="#bcc129"/><rect x="1539.50" y="618.7" width="2.9" height="100.3" fill="#ccc22a"/><rect x="1543.00" y="609.1" width="2.9" height="109.9" fill="#ccc22a"/><rect x="1546.50" y="588.0" width="2.9" height="131.0" fill="#c9ae27"/><rect x="1550.00" y="663.9" width="2.9" height="55.1" fill="#b2c028"/><rect x="1553.50" y="643.2" width="2.9" height="75.8" fill="#b2c028"/><rect x="1557.00" y="648.6" width="2.9" height="70.4" fill="#b2c028"/><rect x="1560.50" y="439.3" width="2.9" height="279.7" fill="#c69c24"/><rect x="1564.00" y="585.8" width="2.9" height="133.2" fill="#cbb929"/><rect x="1567.50" y="580.3" width="2.9" height="138.7" fill="#c8a926"/><rect x="1571.00" y="609.4" width="2.9" height="109.6" fill="#bfc129"/><rect x="1574.50" y="613.0" width="2.9" height="106.0" fill="#bdc129"/><rect x="1578.00" y="566.9" width="2.9" height="152.1" fill="#cab528"/><rect x="1581.50" y="577.4" width="2.9" height="141.6" fill="#cab428"/><rect x="1585.00" y="578.3" width="2.9" height="140.7" fill="#cab628"/><rect x="1588.50" y="619.3" width="2.9" height="99.7" fill="#c0c129"/><rect x="1592.00" y="640.6" width="2.9" height="78.4" fill="#bac129"/><rect x="1595.50" y="640.8" width="2.9" height="78.2" fill="#b5c028"/><rect x="1599.00" y="664.7" width="2.9" height="54.3" fill="#b2c028"/><rect x="1602.50" y="542.0" width="2.9" height="177.0" fill="#c7a525"/><rect x="1606.00" y="599.1" width="2.9" height="119.9" fill="#cab828"/><rect x="1609.50" y="564.7" width="2.9" height="154.3" fill="#c79f25"/><rect x="1613.00" y="659.4" width="2.9" height="59.6" fill="#b2c028"/><rect x="1616.50" y="609.3" width="2.9" height="109.7" fill="#c7c22a"/><rect x="1620.00" y="579.8" width="2.9" height="139.2" fill="#cab528"/><rect x="1623.50" y="583.0" width="2.9" height="136.0" fill="#cab828"/><rect x="1627.00" y="579.3" width="2.9" height="139.7" fill="#cab228"/><rect x="1630.50" y="655.7" width="2.9" height="63.3" fill="#b2c028"/><rect x="1634.00" y="629.2" width="2.9" height="89.8" fill="#b7c028"/><rect x="1637.50" y="626.7" width="2.9" height="92.3" fill="#bec129"/><rect x="1641.00" y="573.9" width="2.9" height="145.1" fill="#cab828"/><rect x="1644.50" y="591.6" width="2.9" height="127.4" fill="#cbbb29"/><rect x="1648.00" y="628.8" width="2.9" height="90.2" fill="#bfc129"/><rect x="1651.50" y="577.6" width="2.9" height="141.4" fill="#c9ae27"/><rect x="1655.00" y="540.2" width="2.9" height="178.8" fill="#c7a225"/><rect x="817.0" y="715.5" width="2.6" height="3.5" fill="#1a9e1a"/><rect x="820.1" y="712.9" width="2.6" height="6.1" fill="#1a9e1a"/><rect x="823.2" y="714.6" width="2.6" height="4.4" fill="#22d822"/><rect x="826.3" y="713.3" width="2.6" height="5.7" fill="#22d822"/><rect x="829.4" y="713.6" width="2.6" height="5.4" fill="#1a9e1a"/><rect x="832.5" y="713.0" width="2.6" height="6.0" fill="#22d822"/><rect x="835.6" y="715.0" width="2.6" height="4.0" fill="#1a9e1a"/><rect x="838.7" y="712.3" width="2.6" height="6.7" fill="#1a9e1a"/><rect x="841.8" y="715.8" width="2.6" height="3.2" fill="#22d822"/><rect x="844.9" y="714.9" width="2.6" height="4.1" fill="#22d822"/><rect x="848.0" y="713.5" width="2.6" height="5.5" fill="#22d822"/><rect x="851.1" y="713.8" width="2.6" height="5.2" fill="#22d822"/><rect x="854.2" y="715.7" width="2.6" height="3.3" fill="#1a9e1a"/><rect x="857.3" y="713.8" width="2.6" height="5.2" fill="#1a9e1a"/><rect x="860.4" y="714.5" width="2.6" height="4.5" fill="#22d822"/><rect x="863.5" y="715.2" width="2.6" height="3.8" fill="#22d822"/><rect x="866.6" y="713.0" width="2.6" height="6.0" fill="#1a9e1a"/><rect x="869.7" y="715.7" width="2.6" height="3.3" fill="#22d822"/><rect x="872.8" y="712.8" width="2.6" height="6.2" fill="#1a9e1a"/><rect x="875.9" y="712.9" width="2.6" height="6.1" fill="#22d822"/><rect x="879.0" y="714.3" width="2.6" height="4.7" fill="#22d822"/><rect x="882.1" y="712.8" width="2.6" height="6.2" fill="#22d822"/><text x="1880.5" y="688.6" font-family="Liberation Sans" font-size="14" fill="#c4c4c4">1</text><text x="1880.5" y="653.2" font-family="Liberation Sans" font-size="14" fill="#c4c4c4">2</text><text x="1880.5" y="617.8" font-family="Liberation Sans" font-size="14" fill="#c4c4c4">3</text><text x="1880.5" y="582.4" font-family="Liberation Sans" font-size="14" fill="#c4c4c4">4</text><text x="1880.5" y="547.0" font-family="Liberation Sans" font-size="14" fill="#c4c4c4">5</text><text x="1880.5" y="511.6" font-family="Liberation Sans" font-size="14" fill="#c4c4c4">6</text><text x="1880.5" y="476.2" font-family="Liberation Sans" font-size="14" fill="#c4c4c4">7</text><text x="1880.5" y="715.5" font-family="Liberation Sans" font-size="14" fill="#c4c4c4">0</text><text transform="translate(1909.5 581) rotate(-90)" text-anchor="middle" font-family="Liberation Sans" font-size="15" font-weight="bold" fill="#c4c4c4">mm/s</text><text x="998.0" y="749.5" text-anchor="middle" font-family="Liberation Sans" font-size="14" fill="#b4b4b4">04:00:00.000</text><text x="1192.5" y="749.5" text-anchor="middle" font-family="Liberation Sans" font-size="14" fill="#b4b4b4">06:00:00.000</text><text x="1387.0" y="749.5" text-anchor="middle" font-family="Liberation Sans" font-size="14" fill="#b4b4b4">08:00:00.000</text><text x="1581.5" y="749.5" text-anchor="middle" font-family="Liberation Sans" font-size="14" fill="#b4b4b4">10:00:00.000</text><text x="1776.0" y="749.5" text-anchor="middle" font-family="Liberation Sans" font-size="14" fill="#b4b4b4">12:00:00.000</text><text x="1342" y="778.5" text-anchor="middle" font-family="Liberation Sans" font-size="14" font-weight="bold" fill="#c4c4c4">Time</text><rect x="829.5" y="802.5" width="856" height="40" fill="#1b3340" stroke="#3d5864" stroke-width="1"/><rect x="843" y="815" width="15" height="15" fill="#e8e8e8"/><path d="M846 822 L849.5 826 L855 817.5" stroke="#222" stroke-width="2" fill="none"/><text x="868" y="828" font-family="Liberation Sans" font-size="15.2" font-weight="bold" fill="#f2f2f2">/Celsa HO/CCM2-L3-WSM-A/Motor/motor shaft/BM1-D/L3A-MOT/Vrms: 20.07.2022 13:11:21 - 21.07.2022 10:46:31</text></svg>
<div class="a" style="left:817px;top:858px;width:1103px;height:43px;background:#625d58;"></div>
<div class="t" style="left:828px;top:872px;font-size:20px;color:#a09c97;">Notatki</div>
<div class="a" style="left:820px;top:901px;width:1100px;height:122.5px;background:#d5dbd6;"></div>
</body></html>
